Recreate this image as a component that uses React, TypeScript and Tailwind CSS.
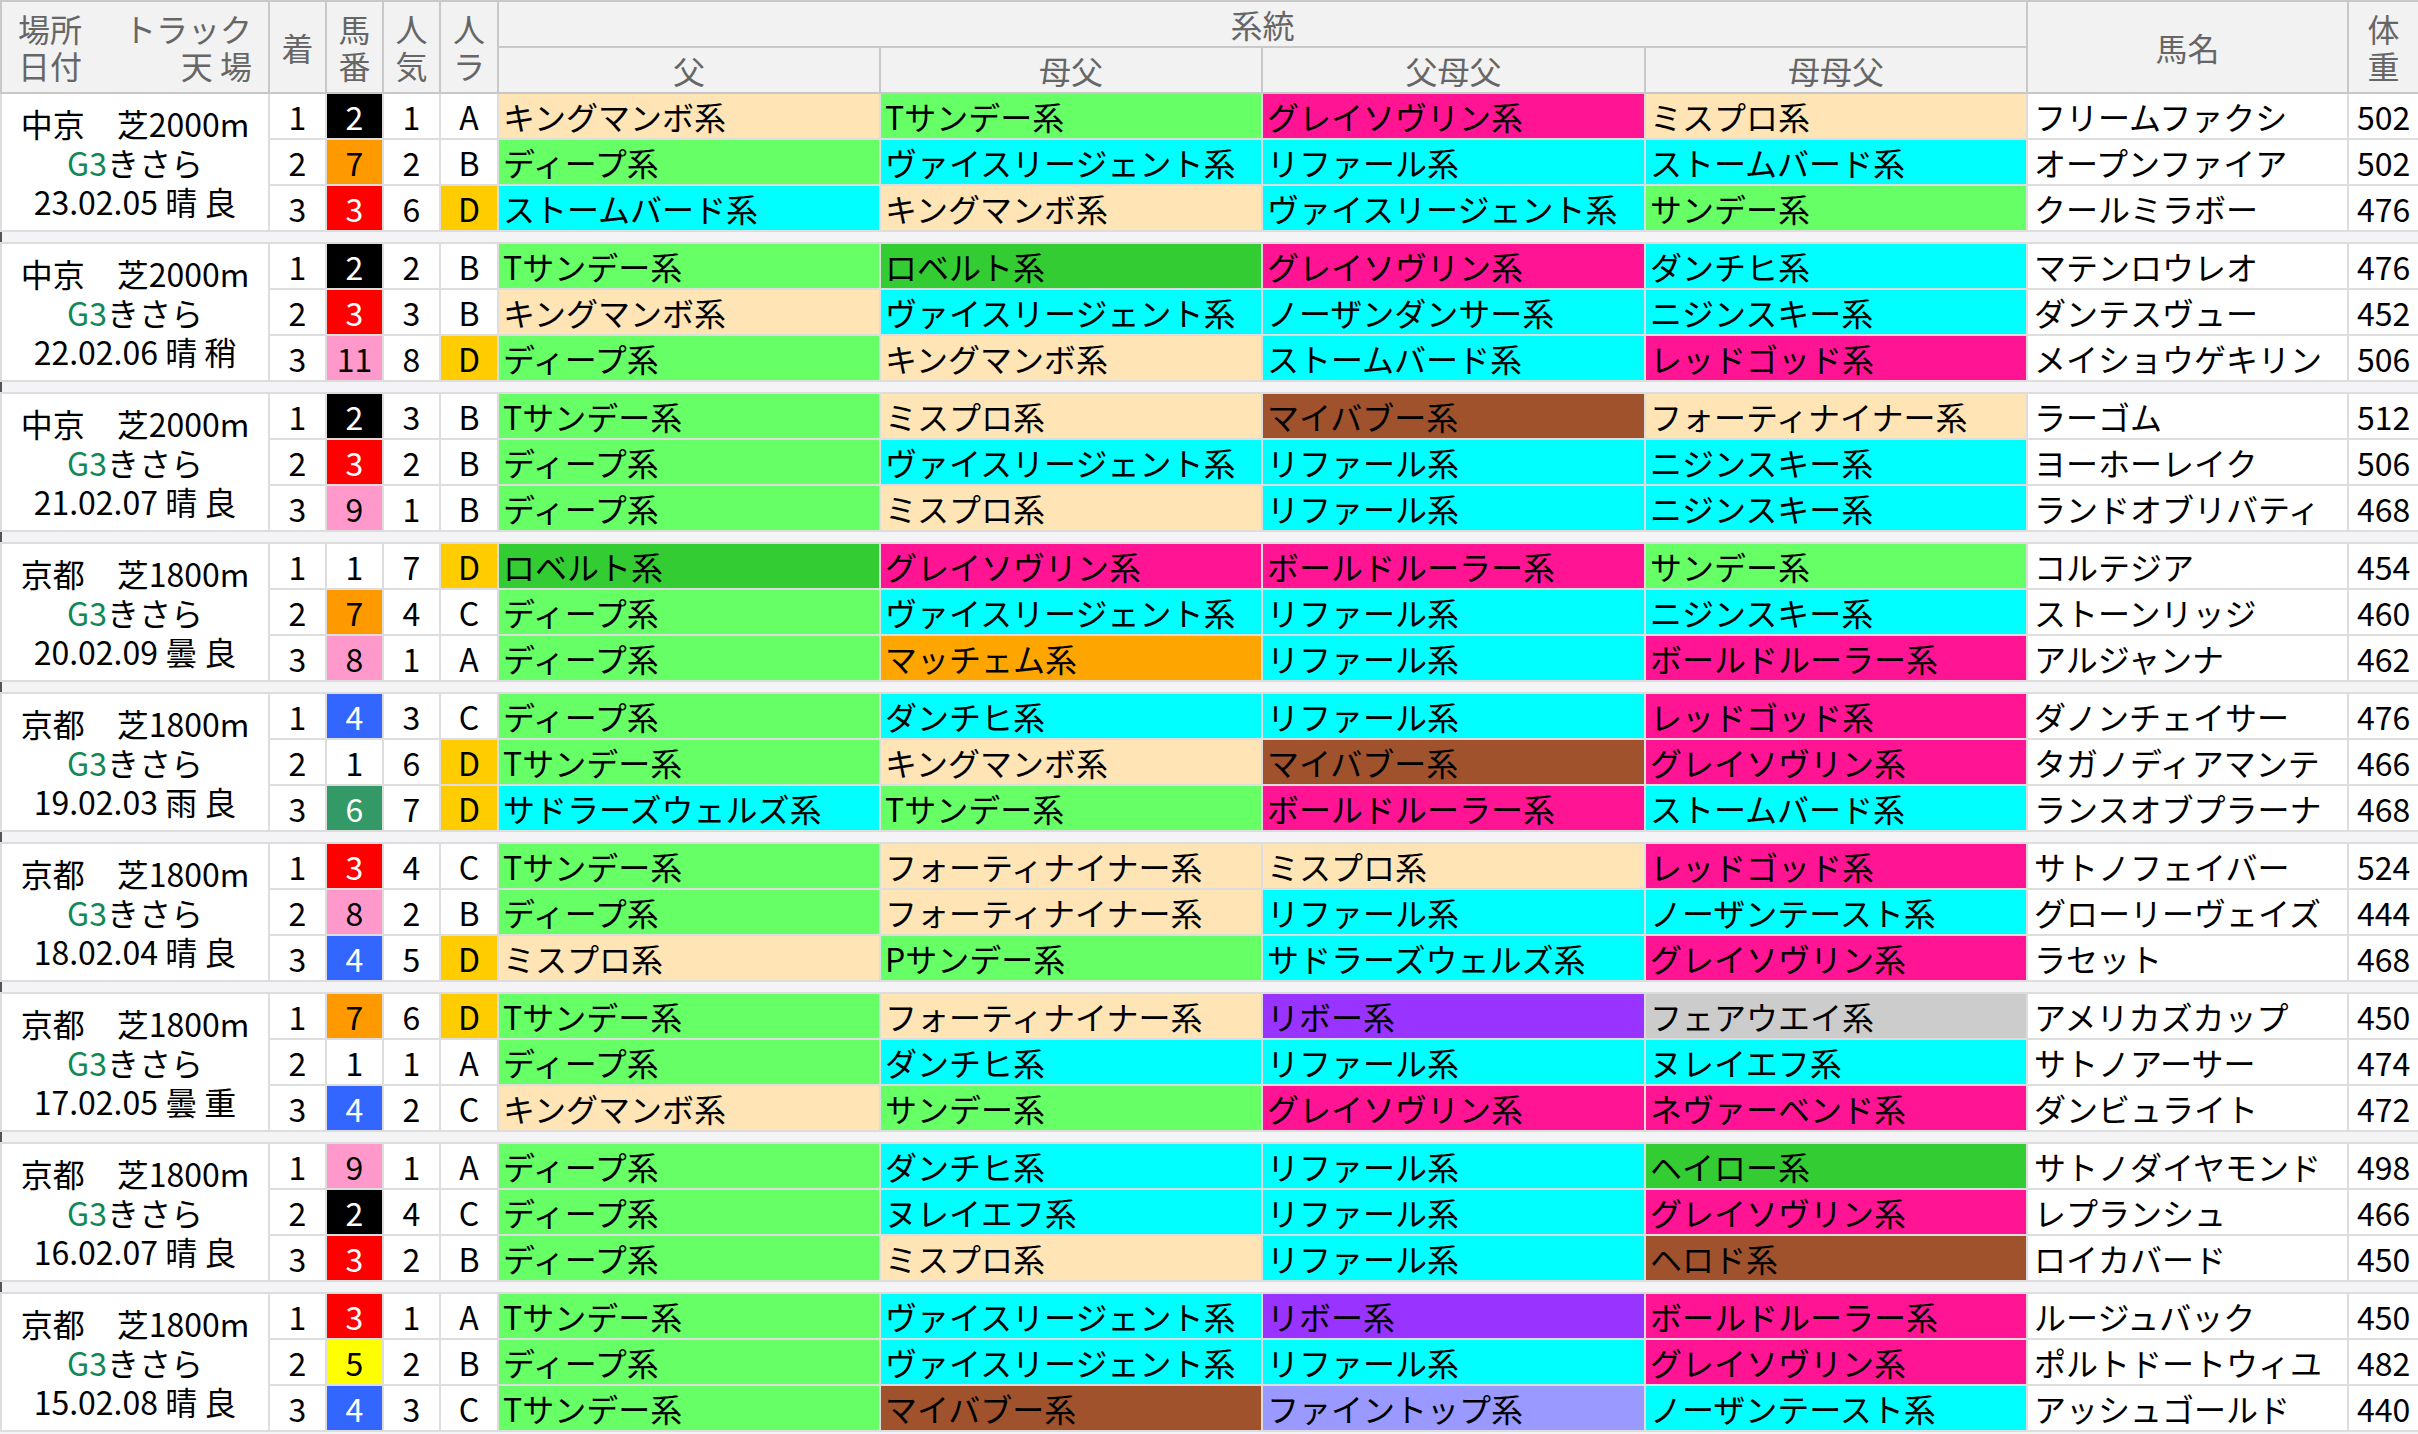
import React from "react";

const C: Record<string, string> = {
  p: "bg-[#ffe4b5]", g: "bg-[#66ff66]", c: "bg-[#00ffff]", k: "bg-[#ff1493]",
  b: "bg-[#a0522d]", d: "bg-[#33cc33]", o: "bg-[#ffa500]", u: "bg-[#9933ff]",
  y: "bg-[#cccccc]", l: "bg-[#9999ff]",
};
const N: Record<number, string> = {
  1: "bg-white text-black", 2: "bg-black text-white", 3: "bg-[#ff0000] text-white",
  4: "bg-[#3366ff] text-white", 5: "bg-[#ffff00] text-black", 6: "bg-[#339966] text-white",
  7: "bg-[#ff9900] text-black", 8: "bg-[#ff99cc] text-black", 9: "bg-[#ff99cc] text-black",
  11: "bg-[#ff99cc] text-black",
};
type Row = [number, number, number, string, string, string, string, string, string, number];
type G = { place: string; date: string; rows: Row[] };
const r = (a: number, b: number, c: number, d: string, e: string, f: string, g: string, h: string, i: string, j: number): Row => [a, b, c, d, e, f, g, h, i, j];
const groups: G[] = [
  { place: "中京　芝2000m", date: "23.02.05 晴 良", rows: [
    r(1,2,1,"A","p:キングマンボ系","g:Tサンデー系","k:グレイソヴリン系","p:ミスプロ系","フリームファクシ",502),
    r(2,7,2,"B","g:ディープ系","c:ヴァイスリージェント系","c:リファール系","c:ストームバード系","オープンファイア",502),
    r(3,3,6,"D","c:ストームバード系","p:キングマンボ系","c:ヴァイスリージェント系","g:サンデー系","クールミラボー",476)]},
  { place: "中京　芝2000m", date: "22.02.06 晴 稍", rows: [
    r(1,2,2,"B","g:Tサンデー系","d:ロベルト系","k:グレイソヴリン系","c:ダンチヒ系","マテンロウレオ",476),
    r(2,3,3,"B","p:キングマンボ系","c:ヴァイスリージェント系","c:ノーザンダンサー系","c:ニジンスキー系","ダンテスヴュー",452),
    r(3,11,8,"D","g:ディープ系","p:キングマンボ系","c:ストームバード系","k:レッドゴッド系","メイショウゲキリン",506)]},
  { place: "中京　芝2000m", date: "21.02.07 晴 良", rows: [
    r(1,2,3,"B","g:Tサンデー系","p:ミスプロ系","b:マイバブー系","p:フォーティナイナー系","ラーゴム",512),
    r(2,3,2,"B","g:ディープ系","c:ヴァイスリージェント系","c:リファール系","c:ニジンスキー系","ヨーホーレイク",506),
    r(3,9,1,"B","g:ディープ系","p:ミスプロ系","c:リファール系","c:ニジンスキー系","ランドオブリバティ",468)]},
  { place: "京都　芝1800m", date: "20.02.09 曇 良", rows: [
    r(1,1,7,"D","d:ロベルト系","k:グレイソヴリン系","k:ボールドルーラー系","g:サンデー系","コルテジア",454),
    r(2,7,4,"C","g:ディープ系","c:ヴァイスリージェント系","c:リファール系","c:ニジンスキー系","ストーンリッジ",460),
    r(3,8,1,"A","g:ディープ系","o:マッチェム系","c:リファール系","k:ボールドルーラー系","アルジャンナ",462)]},
  { place: "京都　芝1800m", date: "19.02.03 雨 良", rows: [
    r(1,4,3,"C","g:ディープ系","c:ダンチヒ系","c:リファール系","k:レッドゴッド系","ダノンチェイサー",476),
    r(2,1,6,"D","g:Tサンデー系","p:キングマンボ系","b:マイバブー系","k:グレイソヴリン系","タガノディアマンテ",466),
    r(3,6,7,"D","c:サドラーズウェルズ系","g:Tサンデー系","k:ボールドルーラー系","c:ストームバード系","ランスオブプラーナ",468)]},
  { place: "京都　芝1800m", date: "18.02.04 晴 良", rows: [
    r(1,3,4,"C","g:Tサンデー系","p:フォーティナイナー系","p:ミスプロ系","k:レッドゴッド系","サトノフェイバー",524),
    r(2,8,2,"B","g:ディープ系","p:フォーティナイナー系","c:リファール系","c:ノーザンテースト系","グローリーヴェイズ",444),
    r(3,4,5,"D","p:ミスプロ系","g:Pサンデー系","c:サドラーズウェルズ系","k:グレイソヴリン系","ラセット",468)]},
  { place: "京都　芝1800m", date: "17.02.05 曇 重", rows: [
    r(1,7,6,"D","g:Tサンデー系","p:フォーティナイナー系","u:リボー系","y:フェアウエイ系","アメリカズカップ",450),
    r(2,1,1,"A","g:ディープ系","c:ダンチヒ系","c:リファール系","c:ヌレイエフ系","サトノアーサー",474),
    r(3,4,2,"C","p:キングマンボ系","g:サンデー系","k:グレイソヴリン系","k:ネヴァーベンド系","ダンビュライト",472)]},
  { place: "京都　芝1800m", date: "16.02.07 晴 良", rows: [
    r(1,9,1,"A","g:ディープ系","c:ダンチヒ系","c:リファール系","d:ヘイロー系","サトノダイヤモンド",498),
    r(2,2,4,"C","g:ディープ系","c:ヌレイエフ系","c:リファール系","k:グレイソヴリン系","レプランシュ",466),
    r(3,3,2,"B","g:ディープ系","p:ミスプロ系","c:リファール系","b:ヘロド系","ロイカバード",450)]},
  { place: "京都　芝1800m", date: "15.02.08 晴 良", rows: [
    r(1,3,1,"A","g:Tサンデー系","c:ヴァイスリージェント系","u:リボー系","k:ボールドルーラー系","ルージュバック",450),
    r(2,5,2,"B","g:ディープ系","c:ヴァイスリージェント系","c:リファール系","k:グレイソヴリン系","ポルトドートウィユ",482),
    r(3,4,3,"C","g:Tサンデー系","b:マイバブー系","l:ファイントップ系","c:ノーザンテースト系","アッシュゴールド",440)]},
];

const td = "border-[2px] border-[#dddddd] h-[46px] p-0 leading-none";
const th = "border-[2px] border-[#c8c8c8] bg-[#f2f2f2] text-[#666666] font-normal p-0 leading-[1.15]";

export default function App() {
  return (
    <div className="w-[2418px] h-[1434px] bg-[#f4f4f6] overflow-hidden text-[32px] text-black" style={{ fontFamily: '"Noto Sans CJK JP", "Noto Sans", sans-serif' }}>
      <table className="border-collapse table-fixed w-[2418px] border-t-[2px] border-l-[2px] border-[#555555]">
        <colgroup>
          {[268, 57, 57, 57, 58, 382, 382, 383, 382, 321, 71].map((w, i) => <col key={i} style={{ width: w }} />)}
        </colgroup>
        <thead>
          <tr className="h-[46px]">
            <th rowSpan={2} className={th + " px-[16px]"}>
              <div className="flex justify-between"><span>場所</span><span>トラック</span></div>
              <div className="flex justify-between"><span>日付</span><span>天 場</span></div>
            </th>
            <th rowSpan={2} className={th}>着</th>
            <th rowSpan={2} className={th}>馬<br />番</th>
            <th rowSpan={2} className={th}>人<br />気</th>
            <th rowSpan={2} className={th}>人<br />ラ</th>
            <th colSpan={4} className={th}>系統</th>
            <th rowSpan={2} className={th}>馬名</th>
            <th rowSpan={2} className={th}>体<br />重</th>
          </tr>
          <tr className="h-[46px]">
            {["父", "母父", "父母父", "母母父"].map((t) => <th key={t} className={th}>{t}</th>)}
          </tr>
        </thead>
        {groups.map((g, gi) => (
          <tbody key={gi}>
            {gi > 0 && <tr className="h-[12px]"><td colSpan={11} className="bg-[#f4f4f6] p-0 border-y-[2px] border-[#dddddd]" /></tr>}
            {g.rows.map((row, ri) => (
              <tr key={ri} className="bg-white">
                {ri === 0 && (
                  <td rowSpan={3} className={td + " text-center bg-white"}>
                    <div className="h-[39px] leading-[39px]">{g.place}</div>
                    <div className="h-[39px] leading-[39px]"><span className="text-[#118855]">G3</span>きさら</div>
                    <div className="h-[39px] leading-[39px]">{g.date}</div>
                  </td>
                )}
                <td className={td + " text-center"}>{row[0]}</td>
                <td className={td + " text-center " + N[row[1]]}>{row[1]}</td>
                <td className={td + " text-center"}>{row[2]}</td>
                <td className={td + " text-center " + (row[3] === "D" ? "bg-[#ffcc00]" : "")}>{row[3]}</td>
                {[row[4], row[5], row[6], row[7]].map((s, k) => {
                  const [col, txt] = s.split(":");
                  return <td key={k} className={td + " pl-[4px] whitespace-nowrap overflow-hidden " + C[col]}>{txt}</td>;
                })}
                <td className={td + " pl-[6px] whitespace-nowrap overflow-hidden"}>{row[8]}</td>
                <td className={td + " text-center"}>{row[9]}</td>
              </tr>
            ))}
          </tbody>
        ))}
      </table>
    </div>
  );
}
